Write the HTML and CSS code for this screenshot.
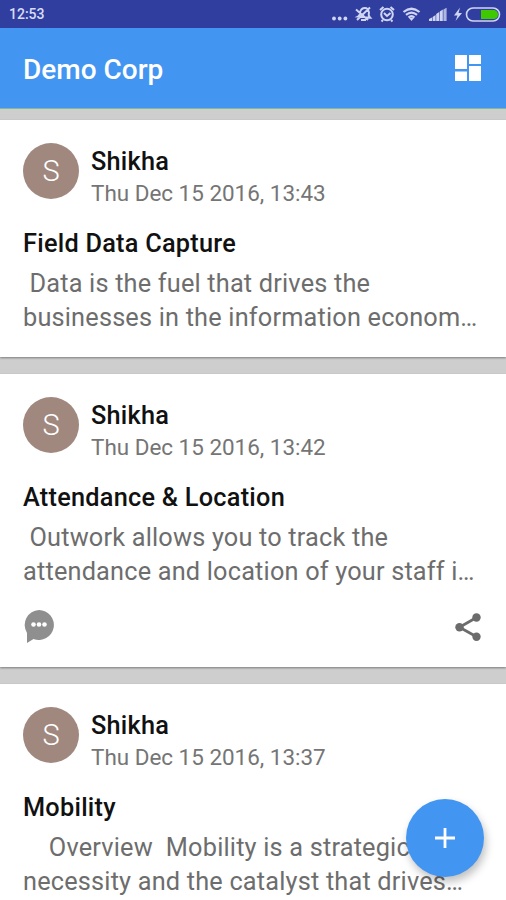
FILE: index.html
```html
<!DOCTYPE html>
<html lang="en">
<head>
<meta charset="utf-8">
<title>Demo Corp</title>
<link rel="stylesheet" href="styles.css">
</head>
<body>
<div class="screen">
  <div class="status">
    <span class="clock">12:53</span>
    <svg class="status-icons" width="180" height="28" viewBox="0 0 180 28" fill="none" stroke="#d0d5f3">
      <g fill="#d0d5f3" stroke="none"><circle cx="8" cy="18.500" r="1.900"/><circle cx="13.700" cy="18.500" r="1.900"/><circle cx="19.400" cy="18.500" r="1.900"/></g>
      <path d="M32 16.500q2-1 2-4q1-4.500 5-4.500q3 0 4 4.500q-1 3 1 5zM35 20h5M30 9.500l12 10.500M44 7.500l-13 12.500" stroke-width="1.900"/>
      <circle cx="61" cy="14.500" r="5.800" stroke-width="2"/><path d="M54 10l3.500-3M68 10l-3.500-3M58 13l3 3 3.500-3M57 20l-1.500 1.500M65 20l1.500 1.500" stroke-width="2"/>
      <path d="M77.500 12q8-6.500 16 0M80 14.800q5.500-4.500 11 0M82.500 17.500q3-2.500 6 0" stroke-width="2.200"/><path d="M83 18h5l-2.500 3z" fill="#d0d5f3" stroke="none"/>
      <g fill="#d0d5f3" stroke="none"><path d="M103 21v-2l3-1.500V21zM106.600 21v-4l3-2v6zM110.200 21v-7l3-2v9zM113.800 21v-9.500l3-2V21z"/><path d="M117.400 21V9.500l3.200-1.800V21z" opacity=".8"/><path d="M134 7.500l-6 8h3.500l-2 5.500 6.500-8h-3.500z"/></g>
      <rect x="140.500" y="8" width="33" height="13" rx="6.500" stroke-width="1.600"/>
      <path d="M155 10h13.500q3.500 1 3.500 4.500t-3.500 4.500H155z" fill="#3fc900" stroke="none"/>
    </svg>
  </div>
  <header class="bar">
    <h1>Demo Corp</h1>
    <svg width="28" height="28" viewBox="0 0 28 28" fill="#fff"><path d="M1 1h12v14H1zM15 1h12v9H15zM1 17.500h12v9.500H1zM15 12h12v15H15z"/></svg>
  </header>
  <main class="feed">
    <article class="card first">
      <div class="author"><div class="avatar">S</div><div><div class="name">Shikha</div><div class="date">Thu Dec 15 2016, 13:43</div></div></div>
      <h2>Field Data Capture</h2>
      <div class="text"><div> Data is the fuel that drives the</div><div>businesses in the information econom…</div></div>
    </article>
    <article class="card second">
      <div class="author"><div class="avatar">S</div><div><div class="name">Shikha</div><div class="date">Thu Dec 15 2016, 13:42</div></div></div>
      <h2>Attendance &amp; Location</h2>
      <div class="text"><div> Outwork allows you to track the</div><div>attendance and location of your staff i…</div></div>
      <div class="actions">
        <svg width="32" height="36" viewBox="0 0 32 36"><path d="M17 1a15 15 0 1 1-5.500 29L5 34V24A15 15 0 0 1 17 1z" fill="#8f8f8f"/><g fill="#fff"><circle cx="11.500" cy="15.500" r="2.300"/><circle cx="17" cy="15.500" r="2.300"/><circle cx="22.500" cy="15.500" r="2.300"/></g></svg>
        <svg width="28" height="30" viewBox="0 0 28 30"><path d="M22.500 5.500l-17 9.700 17 9.600" fill="none" stroke="#6c6c6c" stroke-width="2.800"/><g fill="#6c6c6c"><circle cx="22.500" cy="5.500" r="4.200"/><circle cx="5.500" cy="15.200" r="4.200"/><circle cx="22.500" cy="24.800" r="4.200"/></g></svg>
      </div>
    </article>
    <article class="card third">
      <div class="author"><div class="avatar">S</div><div><div class="name">Shikha</div><div class="date">Thu Dec 15 2016, 13:37</div></div></div>
      <h2>Mobility</h2>
      <div class="text"><div>    Overview  Mobility is a strategic</div><div>necessity and the catalyst that drives…</div></div>
    </article>
  </main>
  <button class="fab" aria-label="Add"><svg width="22" height="22" viewBox="0 0 22 22"><path d="M11 1v20M1 11h20" stroke="#fff" stroke-width="2.800"/></svg></button>
</div>
</body>
</html>
```
FILE: styles.css
```css
* { box-sizing: border-box; }
body { margin: 0; font-family: Roboto, "Liberation Sans", sans-serif; }
h1, h2 { margin: 0; font-weight: 500; }
svg { display: block; flex: none; }
.screen { position: relative; width: 506px; height: 900px; overflow: hidden; display: flex; flex-direction: column; background: #cecece; }
.status { height: 28px; flex: none; background: #303f9f; display: flex; justify-content: space-between; padding-left: 9px; }
.clock { color: #d9ddf6; font-size: 14px; font-weight: 500; line-height: 29px; }
.bar { height: 81px; flex: none; background: #4295f1; border-bottom: 1px solid #81b99b; display: flex; align-items: center; justify-content: space-between; padding: 0 24px 0 23px; }
.bar h1 { color: #fff; font-size: 28px; line-height: 34px; padding-top: 3px; }
.feed { padding-top: 11px; display: flex; flex-direction: column; gap: 17px; }
.card { flex: none; background: #fff; padding: 23px 24px 0 23px; box-shadow: 0 1px 2px rgba(0,0,0,.4); }
.first { height: 237px; }
.second { height: 293px; }
.third { height: 240px; }
.author { display: flex; gap: 12px; height: 70px; }
.avatar { width: 56px; height: 56px; margin-top: -.5px; border-radius: 50%; background: #a1887f; color: #fff; font-size: 29px; font-weight: 300; line-height: 57px; text-align: center; }
.name { color: #111; font-size: 25.3px; font-weight: 500; letter-spacing: .25px; line-height: 32px; margin-top: 3px; }
.date { color: #757575; font-size: 22.45px; line-height: 30px; white-space: pre; }
.card h2 { color: #111; font-size: 25.3px; letter-spacing: .25px; line-height: 34px; margin-top: 14px; }
.text { color: #6d6d6d; font-size: 25.3px; letter-spacing: .19px; line-height: 34px; white-space: pre; margin-top: 6px; }
.actions { display: flex; justify-content: space-between; align-items: center; margin: 20px 0 0 -1px; }
.fab { position: absolute; left: 406px; top: 799px; width: 78px; height: 78px; padding: 0; border: 0; border-radius: 50%; background: #4295f1; display: flex; align-items: center; justify-content: center; box-shadow: 2px 5px 8px rgba(0,0,0,.25); }
```
